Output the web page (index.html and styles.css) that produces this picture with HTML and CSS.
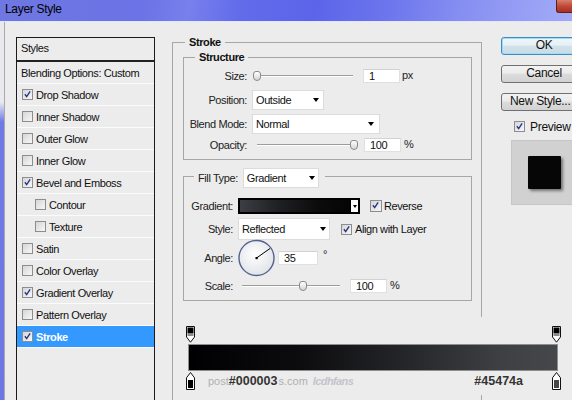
FILE: index.html
```html
<!DOCTYPE html>
<html>
<head>
<meta charset="utf-8">
<title>Layer Style</title>
<link rel="stylesheet" href="styles.css">
</head>
<body>
<div class="window">
  <div class="titlebar">
    <span class="title">Layer Style</span>
    <span class="close"></span>
  </div>
  <div class="frame">
    <div class="body">
      <div class="styles-panel">
        <div class="panel-head">Styles</div>
        <div class="item plain">Blending Options: Custom</div>
        <div class="item"><span class="cb"><svg viewBox="0 0 11 11"><path d="M2.3 5.2l2.2 2.9 4.2-6.4" /></svg></span>Drop Shadow</div>
        <div class="item"><span class="cb"></span>Inner Shadow</div>
        <div class="item"><span class="cb"></span>Outer Glow</div>
        <div class="item"><span class="cb"></span>Inner Glow</div>
        <div class="item"><span class="cb"><svg viewBox="0 0 11 11"><path d="M2.3 5.2l2.2 2.9 4.2-6.4" /></svg></span>Bevel and Emboss</div>
        <div class="item sub"><span class="cb"></span>Contour</div>
        <div class="item sub"><span class="cb"></span>Texture</div>
        <div class="item"><span class="cb"></span>Satin</div>
        <div class="item"><span class="cb"></span>Color Overlay</div>
        <div class="item"><span class="cb"><svg viewBox="0 0 11 11"><path d="M2.3 5.2l2.2 2.9 4.2-6.4" /></svg></span>Gradient Overlay</div>
        <div class="item"><span class="cb"></span>Pattern Overlay</div>
        <div class="item selected"><span class="cb"><svg viewBox="0 0 11 11"><path d="M2.3 5.2l2.2 2.9 4.2-6.4" /></svg></span>Stroke</div>
      </div>

      <div class="group stroke-group">
        <div class="group-head"><span class="legend">Stroke</span></div>

        <div class="group structure">
          <div class="group-head"><span class="legend legend-inner">Structure</span></div>
          <div class="row row-size">
            <span class="lbl lbl-s">Size:</span>
            <div class="slider"><span class="thumb" style="margin-left:1px"></span></div>
            <span class="num">1</span><span class="unit">px</span>
          </div>
          <div class="row row-pos">
            <span class="lbl lbl-s">Position:</span>
            <div class="select sel-pos"><span>Outside</span><span class="arrow"></span></div>
          </div>
          <div class="row row-blend">
            <span class="lbl lbl-s">Blend Mode:</span>
            <div class="select sel-blend"><span>Normal</span><span class="arrow"></span></div>
          </div>
          <div class="row row-opacity">
            <span class="lbl lbl-s">Opacity:</span>
            <div class="slider"><span class="thumb" style="margin-left:98px"></span></div>
            <span class="num num-op">100</span><span class="unit unit-pct">%</span>
          </div>
        </div>

        <div class="group fill">
          <div class="fill-head">
            <span class="fill-label">Fill Type:</span>
            <div class="select sel-fill"><span>Gradient</span><span class="arrow"></span></div>
          </div>
          <div class="row row-grad">
            <span class="lbl lbl-f">Gradient:</span>
            <div class="grad-swatch"><span class="grad-fill"></span><span class="grad-dd"><span class="arrow small"></span></span></div>
            <span class="cb cb-rev"><svg viewBox="0 0 11 11"><path d="M2.3 5.2l2.2 2.9 4.2-6.4" /></svg></span><span class="cb-text">Reverse</span>
          </div>
          <div class="row row-style">
            <span class="lbl lbl-f">Style:</span>
            <div class="select sel-style"><span>Reflected</span><span class="arrow"></span></div>
            <span class="cb cb-align"><svg viewBox="0 0 11 11"><path d="M2.3 5.2l2.2 2.9 4.2-6.4" /></svg></span><span class="cb-text">Align with Layer</span>
          </div>
          <div class="row row-angle">
            <span class="lbl lbl-f">Angle:</span>
            <svg class="dial" width="38" height="38" viewBox="0 0 38 38">
              <defs>
                <radialGradient id="dialfill" cx="45%" cy="40%" r="65%">
                  <stop offset="0" stop-color="#ffffff"/>
                  <stop offset="1" stop-color="#dfe1e6"/>
                </radialGradient>
              </defs>
              <circle cx="18.5" cy="19" r="17.5" fill="url(#dialfill)" stroke="#53628f" stroke-width="1.4"/>
              <line x1="18.5" y1="19" x2="32" y2="9.5" stroke="#000" stroke-width="1"/>
              <rect x="17.5" y="18" width="2.2" height="2.2" fill="#000"/>
            </svg>
            <span class="num num-angle">35</span><span class="deg">°</span>
          </div>
          <div class="row row-scale">
            <span class="lbl lbl-f">Scale:</span>
            <div class="slider slider-scale"><span class="thumb" style="margin-left:61px"></span></div>
            <span class="num num-scale">100</span><span class="unit unit-scale">%</span>
          </div>
        </div>
      </div>

      <div class="actions">
        <div class="btn btn-ok">OK</div>
        <div class="btn">Cancel</div>
        <div class="btn btn-new">New Style...</div>
        <div class="preview-row"><span class="cb"><svg viewBox="0 0 11 11"><path d="M2.3 5.2l2.2 2.9 4.2-6.4" /></svg></span><span class="preview-text">Preview</span></div>
        <div class="preview-box"><span class="preview-square"></span></div>
      </div>
    </div>
  </div>

  <div class="gradient-editor">
    <div class="stops-top">
      <svg width="9" height="17" viewBox="0 0 9 17"><path d="M0.5 0.5h8v10.5l-4 5.2-4-5.2z" fill="#fff" stroke="#111"/><rect x="1.5" y="1.5" width="6" height="6" fill="#000"/><rect x="1.5" y="7.5" width="6" height="2.5" fill="#8a8a8a"/></svg>
      <svg width="9" height="17" viewBox="0 0 9 17"><path d="M0.5 0.5h8v10.5l-4 5.2-4-5.2z" fill="#fff" stroke="#111"/><rect x="1.5" y="1.5" width="6" height="6" fill="#000"/><rect x="1.5" y="7.5" width="6" height="2.5" fill="#8a8a8a"/></svg>
    </div>
    <div class="grad-bar"></div>
    <div class="stops-bottom">
      <svg width="9" height="18" viewBox="0 0 9 18"><path d="M4.5 0.5l4 5.3v11.7h-8v-11.7z" fill="#fff" stroke="#111"/><rect x="2" y="8" width="5" height="8" fill="#000"/></svg>
      <span class="wm wm-post">post</span><span class="hex hex-left">#000003</span><span class="wm wm-com">s.com</span><span class="wm wm-logo">lcdhfans</span>
      <span class="spacer"></span>
      <span class="hex">#45474a</span>
      <svg class="stop-right" width="9" height="18" viewBox="0 0 9 18"><path d="M4.5 0.5l4 5.3v11.7h-8v-11.7z" fill="#fff" stroke="#111"/><rect x="2" y="8" width="5" height="8" fill="#45474a"/></svg>
    </div>
  </div>
</div>
</body>
</html>
```

FILE: styles.css
```css
* { box-sizing: border-box; }

html, body {
  margin: 0;
  padding: 0;
}

body {
  width: 572px;
  height: 400px;
  overflow: hidden;
  background: #ececec;
  font-family: "Liberation Sans", Arial, sans-serif;
  font-size: 11px;
  letter-spacing: -0.4px;
  color: #1a1a1a;
}

.window {
  position: relative;
  width: 572px;
  height: 400px;
  overflow: hidden;
  display: flex;
  flex-direction: column;
}

/* ---------- title bar ---------- */
.titlebar {
  flex: none;
  height: 22px;
  display: flex;
  justify-content: space-between;
  align-items: flex-start;
  border-bottom: 1px solid #e4e7fb;
  background: linear-gradient(100deg, #6f77e2 0%, #6b73e6 25%, #7880ec 33%, #626bea 42%, #5c65e9 55%, #6d76ed 68%, #858ef1 80%, #9ca4f6 95%, #a3aaf6 100%);
}

.title {
  padding: 2px 0 0 5px;
  font-size: 12px;
  line-height: 14px;
  letter-spacing: -0.3px;
  color: #000;
}

.close {
  width: 16px;
  height: 13px;
  border: 1px solid #5e2119;
  border-top: none;
  border-right: none;
  border-bottom-left-radius: 3px;
  background: linear-gradient(#d8806f, #c1493a 50%, #a8301f);
}

/* ---------- frame ---------- */
.frame {
  flex: 1;
  display: flex;
  padding-left: 4px;
  background: linear-gradient(to bottom, #e9e9ee 0, #e9e9ee 80px, #7079e6 100px, #6e76e6 100%);
}

.body {
  flex: 1;
  min-width: 0;
  display: flex;
  align-items: flex-start;
  background: #ececec;
  border-left: 1px solid #a9a9a9;
}

/* ---------- styles list ---------- */
.styles-panel {
  flex: none;
  width: 139px;
  height: 380px;
  margin: 15px 0 0 11px;
  border: 1px solid #1b1b1b;
  border-bottom: none;
  color: #111;
}

.panel-head {
  height: 24px;
  padding-left: 4px;
  line-height: 21px;
  border-bottom: 2px solid #222;
}

.item {
  height: 22px;
  display: flex;
  align-items: center;
  gap: 3px;
  padding-left: 5px;
  border-bottom: 1px solid #fbfbfb;
}

.item.plain { padding-left: 4px; }
.item.sub { padding-left: 18px; }

.item.selected {
  background: #3399ff;
  color: #fff;
  font-weight: bold;
}

.cb {
  flex: none;
  width: 11px;
  height: 11px;
  border: 1px solid #8d8d8d;
  background: linear-gradient(135deg, #d6d6d6, #f7f7f7);
  display: flex;
}

.cb svg {
  width: 9px;
  height: 9px;
}

.cb path {
  fill: none;
  stroke: #24348a;
  stroke-width: 1.7;
}

/* ---------- group boxes ---------- */
.group {
  border: 1px solid #a6a6a6;
}

.stroke-group {
  flex: none;
  width: 310px;
  height: 400px;
  margin: 20px 0 0 17px;
  padding: 0 9px 0 10px;
}

.group-head {
  height: 13px;
  margin-top: -7px;
  line-height: 13px;
  display: flex;
}

.legend {
  margin-left: 2px;
  padding: 0 4px;
  background: #ececec;
  font-weight: bold;
  color: #111;
}

.legend-inner { margin-left: 11px; }

.structure {
  margin-top: 8px;
  padding-bottom: 4px;
}

.row {
  display: flex;
  align-items: center;
  height: 20px;
}

.lbl {
  flex: none;
  text-align: right;
  color: #222;
}

.lbl-s { width: 63px; margin-right: 5px; }
.lbl-f { width: 49px; margin-right: 5px; }

.row-size { margin-top: 2px; }
.row-pos { margin-top: 4px; }
.row-blend { margin-top: 4px; }
.row-opacity { margin-top: 1px; }

/* slider */
.slider {
  flex: none;
  width: 104px;
  height: 10px;
  display: flex;
  background-image: linear-gradient(to bottom, transparent 4px, #9d9d9d 4px, #9d9d9d 5px, #ffffff 5px, #ffffff 6px, transparent 6px);
  background-repeat: no-repeat;
  background-position: 5px 0;
  background-size: 96px 100%;
}

.slider-scale {
  width: 106px;
  background-position: 4px 0;
  background-size: 98px 100%;
}

.thumb {
  flex: none;
  width: 8px;
  height: 10px;
  border: 1px solid #8b8b8b;
  border-radius: 3px 3px 4px 4px;
  background: linear-gradient(#ffffff, #d5d5d5);
}

.num {
  flex: none;
  width: 37px;
  height: 14px;
  margin-left: 7px;
  padding-left: 5px;
  line-height: 13px;
  background: #fff;
  border: 1px solid #e0e0e0;
  border-top-color: #d2d2d2;
  color: #111;
}

.num-op { margin-left: 8px; }

.unit {
  margin-left: 2px;
  margin-top: -3px;
  color: #222;
}

.unit-pct { margin-left: 3px; }

/* select */
.select {
  flex: none;
  height: 20px;
  display: flex;
  align-items: center;
  justify-content: space-between;
  padding: 0 4px 0 3px;
  background: #fff;
  border: 1px solid #dcdcdc;
  color: #111;
}

.sel-pos { width: 72px; }
.sel-blend { width: 128px; padding-right: 5px; }
.sel-fill { width: 76px; padding-right: 3px; }
.sel-style { width: 92px; height: 22px; padding-right: 3px; }

.arrow {
  width: 0;
  height: 0;
  border-left: 3.5px solid transparent;
  border-right: 3.5px solid transparent;
  border-top: 4px solid #000;
}

.arrow.small {
  border-left-width: 2.5px;
  border-right-width: 2.5px;
  border-top-width: 3px;
}

/* fill group */
.fill {
  margin-top: 16px;
  padding-bottom: 7px;
}

.fill-head {
  display: flex;
  width: max-content;
  align-items: center;
  gap: 5px;
  height: 20px;
  margin: -9px 0 0 10px;
  padding: 0 6px 0 4px;
  background: #ececec;
}

.fill-label { color: #222; }

.row-grad { height: 16px; margin-top: 10px; }
.row-style { height: 22px; margin-top: 4px; }
.row-angle { height: 38px; margin-top: -1px; }
.row-scale { height: 14px; margin-top: 2px; }

.grad-swatch {
  flex: none;
  width: 122px;
  height: 16px;
  display: flex;
  border: 2px solid #000;
}

.grad-fill {
  flex: 1;
  background: linear-gradient(to right, #3d3e43, #1f2023 35%, #0c0c0d 70%, #050505);
}

.grad-dd {
  flex: none;
  width: 8px;
  display: flex;
  align-items: center;
  justify-content: center;
  background: #fff;
  border-left: 1px solid #000;
}

.cb-rev { margin-left: 10px; width: 12px; height: 12px; }
.cb-align { margin-left: 11px; }

.cb-text {
  margin-left: 2px;
  color: #111;
}

.cb-align + .cb-text { margin-left: 3px; }

.dial { flex: none; }

.num-angle {
  width: 40px;
  margin-left: 2px;
}

.deg {
  margin-left: 5px;
  margin-top: -9px;
  color: #222;
}

.num-scale { margin-left: 6px; }
.unit-scale { margin-left: 3px; }

/* ---------- buttons column ---------- */
.actions {
  flex: none;
  width: 86px;
  margin: 15px 0 0 19px;
  display: flex;
  flex-direction: column;
}

.btn {
  height: 18px;
  margin-bottom: 10px;
  border: 1px solid #707070;
  border-radius: 3px;
  background: linear-gradient(#f3f3f3 0, #ebebeb 45%, #dcdcdc 50%, #d2d2d2 100%);
  font-size: 12px;
  line-height: 15px;
  letter-spacing: -0.3px;
  text-align: center;
  color: #111;
  white-space: nowrap;
}

.btn-ok {
  border-color: #3c8dc4;
  box-shadow: inset 0 0 0 1px #9edcf7;
  background: linear-gradient(#eef6fa 0, #e6f0f5 45%, #d3e2ea 50%, #c9dbe4 100%);
}

.btn-new {
  text-align: left;
  padding-left: 8px;
}

.preview-row {
  display: flex;
  align-items: center;
  height: 11px;
  margin-left: 13px;
}

.preview-text {
  margin-left: 5px;
  font-size: 12px;
  letter-spacing: -0.3px;
  color: #111;
}

.preview-box {
  width: 66px;
  height: 65px;
  margin: 8px 0 0 10px;
  display: flex;
  align-items: center;
  justify-content: center;
  background: #d1d1d1;
  border: 1px solid #c6c6c6;
}

.preview-square {
  width: 33px;
  height: 33px;
  border-radius: 1px;
  background: #060606;
  box-shadow: 2px 2px 3px rgba(0, 0, 0, 0.45);
}

/* ---------- gradient annotation overlay ---------- */
.gradient-editor {
  position: absolute;
  left: 176px;
  top: 317px;
  width: 396px;
  height: 78px;
  background: #ececec;
  display: flex;
  flex-direction: column;
}

.stops-top {
  display: flex;
  justify-content: space-between;
  height: 17px;
  margin-top: 9px;
  padding: 0 11px 0 10px;
}

.grad-bar {
  width: 370px;
  height: 27px;
  margin: 1px 0 0 12px;
  border: 1px solid #8e8e8e;
  background: linear-gradient(to right, #000003, #0c0c0e 30%, #26272a 60%, #3e4043 85%, #45474a);
}

.stops-bottom {
  display: flex;
  align-items: center;
  height: 19px;
  padding: 0 11px 0 10px;
}

.wm {
  color: #b0b0b0;
  letter-spacing: 0;
}

.wm-post { margin-left: 13px; }
.wm-com { margin-left: 1px; }

.wm-logo {
  margin-left: 5px;
  font-style: italic;
  font-weight: bold;
  color: #c3c4cc;
  letter-spacing: -0.6px;
}

.hex {
  font-size: 12.5px;
  font-weight: bold;
  letter-spacing: 0;
  color: #343434;
}

.spacer { flex: 1; }

.stop-right { margin-left: 29px; }
```
